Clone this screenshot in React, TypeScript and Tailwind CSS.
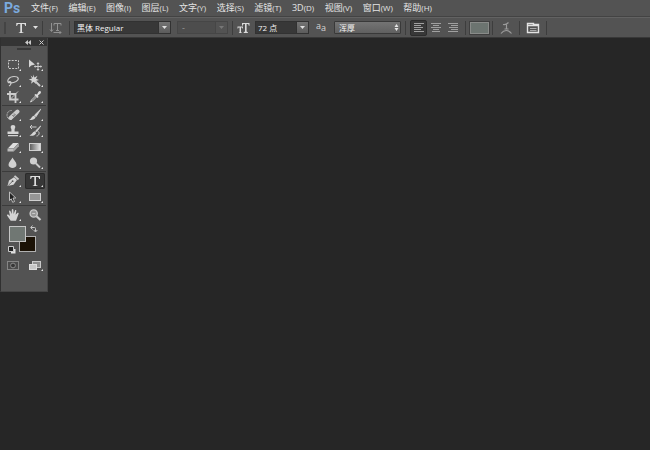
import type { ReactNode } from "react";

const menus = [
  ["文件", "(F)"], ["编辑", "(E)"], ["图像", "(I)"], ["图层", "(L)"], ["文字", "(Y)"], ["选择", "(S)"],
  ["滤镜", "(T)"], ["3D", "(D)"], ["视图", "(V)"], ["窗口", "(W)"], ["帮助", "(H)"],
];

function Icon({ children, className = "h-3.5 w-3.5" }: { children: ReactNode; className?: string }) {
  return (
    <svg viewBox="0 0 14 14" className={`shrink-0 ${className}`} fill="none" stroke="#cbcbcb" aria-hidden="true">
      {children}
    </svg>
  );
}

function Arrow({ color = "#e0e0e0" }: { color?: string }) {
  return (
    <svg viewBox="0 0 5 3" className="h-[3px] w-[5px] shrink-0" aria-hidden="true">
      <path d="M0 0H5L2.5 3Z" fill={color} />
    </svg>
  );
}

function Separator({ className }: { className: string }) {
  return <span className={`h-3.5 w-px shrink-0 bg-[#3d3d3d] ${className}`} />;
}

type Tool = { name: string; art: ReactNode; active?: boolean; single?: boolean };

const groups: Tool[][] = [
  [
    { name: "矩形选框", art: <rect x="2.5" y="2.5" width="10" height="8" strokeDasharray="2 1.2" /> },
    {
      name: "移动",
      art: (
        <>
          <path d="M1 1.5V9.5L3.2 7.5L7 6.5Z" fill="#d6d6d6" stroke="none" />
          <path d="M6.5 8.5H13.5M10 5V12" />
          <path d="M10 4L11.5 6H8.5ZM10 13L8.5 11H11.5ZM6 8.5L7.5 7V10ZM14 8.5L12.5 7V10Z" fill="#cbcbcb" stroke="none" />
        </>
      ),
    },
    { name: "套索", art: <path d="M3 9C0 7 3 2.5 8 2.5C13 2.5 13.5 5.5 10 7.5C7 9 3 9.5 3 8C3 7 5.5 7.5 5 9.5C4.8 10.7 4 11.5 3 12" strokeWidth="1.2" /> },
    {
      name: "魔棒",
      art: (
        <>
          <path d="M5.5 0.5L6.4 3.6L9.5 1.8L8 4.8L11 6L7.8 6.9L8 10L5.6 7.8L3 9.8L3.8 6.7L0.8 5.5L4 4.6L2.6 1.6L5 3.4Z" fill="#d4d4d4" stroke="none" />
          <path d="M7.5 7.5L12 12" strokeWidth="2" />
        </>
      ),
    },
    { name: "裁剪", art: <><path d="M4 1V9.5H12.5M1 4H9.5V13" strokeWidth="1.8" /><path d="M4.5 9L12 1.5" strokeWidth="0.9" /></> },
    {
      name: "吸管",
      art: (
        <>
          <path d="M7.5 4L9 4.5L10.5 1.8C12 0 14 2 12.5 3.5L10 5.5L10.5 7L9.5 8L6.3 5Z" fill="#d9d9d9" stroke="none" />
          <path d="M7.5 6L3.5 10L2.5 12L4.5 11L8.7 6.8" />
        </>
      ),
    },
  ],
  [
    {
      name: "污点修复画笔",
      art: (
        <>
          <path d="M5.5 11.5C-0.5 12 -0.5 2.5 5.5 2.5" strokeDasharray="1.2 1" />
          <path d="M4.5 10L11.5 3.5" strokeWidth="4" strokeLinecap="round" />
          <path d="M6.2 7L8.2 9M8 5.4L10 7.4M7.2 7.2H9" stroke="#666" strokeWidth="0.8" />
        </>
      ),
    },
    { name: "画笔", art: <><path d="M12.7 1.2L6.5 7.2L8 8.7Z" fill="#ddd" /><path d="M6 7.7L7.6 9.3C6.6 12 3.8 12.3 1 11.8C3.5 11 3.2 8.5 6 7.7Z" fill="#d5d5d5" stroke="none" /></> },
    { name: "仿制图章", art: <path d="M7 1C10 1 9.5 4 8.6 5V7.5H12.5V10H1.5V7.5H5.4V5C4.5 4 4 1 7 1ZM2 11H12V12.3H2Z" fill="#d4d4d4" stroke="none" /> },
    { name: "历史记录画笔", art: <><path d="M2 3H8.5M2 3L4 1M2 3L4 5M10.5 7.5C12 9.5 10.5 12 8.5 12" /><path d="M12.7 2L7.5 7L8.5 8Z" fill="#ddd" /><path d="M6.7 7.3L8.3 8.9C7 11.8 4 12 1.5 11.5C4.2 10.5 4 8.5 6.7 7.3Z" fill="#d5d5d5" stroke="none" /></> },
    { name: "橡皮擦", art: <><path d="M7 3H12.7L7.8 8.3H2Z" fill="#dedede" stroke="none" /><path d="M1.5 8.5H7.8V11.5H1.5Z" fill="#bcbcbc" stroke="none" /><path d="M7.8 8.5L12.8 3.2V6.2L7.8 11.5Z" fill="#a5a5a5" stroke="none" /></> },
    {
      name: "渐变",
      art: (
        <>
          <defs><linearGradient id="ramp"><stop stopColor="#5a5a5a" /><stop offset="1" stopColor="#e6e6e6" /></linearGradient></defs>
          <rect x="1.5" y="3.5" width="11" height="7" fill="url(#ramp)" stroke="#d0d0d0" />
        </>
      ),
    },
    { name: "模糊", art: <path d="M6.5 1.5C7.5 4 10.5 6 10.5 8.8C10.5 13 2.5 13 2.5 8.8C2.5 6 5.5 4 6.5 1.5Z" fill="#d0d0d0" stroke="none" /> },
    { name: "减淡", art: <><circle cx="5.5" cy="5" r="3.6" fill="#cfcfcf" stroke="none" /><path d="M8 7.5L12 11.5" strokeWidth="1.8" /></> },
  ],
  [
    {
      name: "钢笔",
      art: (
        <>
          <path d="M1.5 12L3 6.5L8 3.2L11 6L7.5 10.8Z" fill="#d5d5d5" stroke="none" />
          <path d="M8.5 1.8L12.5 5.5" strokeWidth="1.8" />
          <path d="M2.2 11.5L6 7.8" stroke="#555" strokeWidth="0.8" /><circle cx="6.6" cy="7.2" r="0.9" fill="#555" stroke="none" />
        </>
      ),
    },
    { name: "横排文字", active: true, art: <path d="M2.3 2H12V5H11.2C11 3.5 10.5 3 9.2 3H8V10.5C8 11.2 8.5 11.4 9.5 11.5V12H4.8V11.5C5.8 11.4 6.3 11.2 6.3 10.5V3H5C3.8 3 3.3 3.5 3.1 5H2.3Z" fill="#dedede" stroke="none" /> },
    { name: "路径选择", art: <path d="M3.5 2L9.8 8H7L8.5 11.5L6.7 12.3L5.2 8.8L3.5 10.5Z" fill="#222" stroke="#c9c9c9" strokeWidth="0.9" /> },
    { name: "矩形", art: <rect x="1.5" y="3.5" width="11" height="7" fill="#969696" stroke="#d0d0d0" /> },
  ],
  [
    { name: "抓手", art: <path d="M4.7 12.7L1 7.5C0.8 6.5 2 6.2 2.8 7L4 8L3 3.3C3 2.2 4.2 2.2 4.6 3.3L5.7 6L5.8 1.8C6 .8 7.2 .8 7.4 1.8L7.6 6L9 2.6C9.4 1.7 10.5 2.1 10.3 3.1L9.6 6.8L11.5 4.8C12.4 4.3 13 5.2 12.5 6L10 12.7Z" fill="#d4d4d4" stroke="none" /> },
    { name: "缩放", single: true, art: <><circle cx="5.7" cy="5.5" r="3.6" fill="#969696" strokeWidth="1.4" /><path d="M4.2 5.5H7.2" /><path d="M8.5 8.2L12.5 12" strokeWidth="2.2" /></> },
  ],
];

function ToolButton({ tool }: { tool: Tool }) {
  return (
    <button
      type="button"
      aria-label={tool.name}
      aria-pressed={!!tool.active}
      className={`relative flex h-4 items-center justify-center rounded-[2px] ${tool.active ? "bg-[#373737] ring-1 ring-[#2a2a2a] ring-inset" : ""}`}
    >
      <Icon>{tool.art}</Icon>
      {!tool.single && (
        <svg viewBox="0 0 2 2" className="absolute right-0.5 bottom-0.5 h-0.5 w-0.5" aria-hidden="true">
          <path d="M2 0V2H0Z" fill="#e6e6e6" />
        </svg>
      )}
    </button>
  );
}

function Combo({ label, value, width, muted = false }: { label: string; value: string; width: string; muted?: boolean }) {
  return (
    <div className={`flex h-[13px] shrink-0 border ${width} ${muted ? "border-[#464646]" : "border-[#323232]"}`}>
      <input
        aria-label={label}
        defaultValue={value}
        disabled={muted}
        className={`min-w-0 flex-1 leading-[11px] outline-none ${muted ? "bg-[#4d4d4d] pl-1 text-[9px] text-[#999999]" : "bg-[#383838] pl-0.5 text-[8px] text-[#f4f4f4]"}`}
      />
      <button
        type="button"
        aria-label={`${label}选项`}
        disabled={muted}
        className={`flex w-3 items-center justify-center border-l ${muted ? "border-[#464646] bg-[#535353]" : "border-[#323232] bg-gradient-to-b from-[#737373] to-[#5c5c5c]"}`}
      >
        <Arrow color={muted ? "#777777" : undefined} />
      </button>
    </div>
  );
}

function AlignButton({ label, d, active = false }: { label: string; d: string; active?: boolean }) {
  return (
    <button
      type="button"
      aria-label={label}
      aria-pressed={active}
      className={`flex h-4 w-[17px] shrink-0 items-center justify-center rounded-[2px] border ${active ? "border-[#2c2c2c] bg-[#383838]" : "border-transparent"}`}
    >
      <svg viewBox="0 0 10 9" className="h-[9px] w-2.5" stroke="#a0a0a0" aria-hidden="true"><path d={d} /></svg>
    </button>
  );
}

export default function App() {
  return (
    <div className="flex min-h-screen flex-col overflow-x-hidden bg-[#262626] font-['Open_Sans','Noto_Sans_CJK_SC',sans-serif] text-[9px] text-[#e4e4e4]">
      <header>
        <nav aria-label="主菜单" className="flex h-[17px] items-center border-b border-[#434343] bg-[#535353] pl-1">
          <span className="w-[27px] shrink-0 font-['Roboto',sans-serif] text-[14px] leading-4 font-bold text-[#7baade]">Ps</span>
          <div className="flex w-[401px] justify-between leading-4">
            {menus.map(([name, key]) => (
              <button key={name} type="button" className="shrink-0 whitespace-nowrap">
                {name}<span className="text-[8px]">{key}</span>
              </button>
            ))}
          </div>
        </nav>
        <div role="toolbar" aria-label="文字选项" className="flex h-[21px] items-center border-t border-b border-t-[#626262] border-b-[#383838] bg-[#535353]">
          <span className="ml-1 h-3 w-0.5 shrink-0 border-x border-[#444444]" />
          <button type="button" aria-label="当前工具" className="ml-2 flex w-6 shrink-0 items-center justify-between">
            <Icon><path d="M2.3 2H12V5H11.2C11 3.5 10.5 3 9.2 3H8V10.5C8 11.2 8.5 11.4 9.5 11.5V12H4.8V11.5C5.8 11.4 6.3 11.2 6.3 10.5V3H5C3.8 3 3.3 3.5 3.1 5H2.3Z" fill="#dedede" stroke="none" /></Icon>
            <Arrow />
          </button>
          <Separator className="ml-1" />
          <button type="button" aria-label="切换文本取向" className="ml-1.5 shrink-0">
            <Icon><path d="M5 4.5V2.5H12V4.5M8.5 2.5V9M7 9.5H10M2.5 2V10M1 8.5L2.5 10.5L4 8.5M4.5 11.5H12M10.5 10L12 11.5L10.5 13" stroke="#929292" /></Icon>
          </button>
          <Separator className="ml-1.5" />
          <div className="ml-1 shrink-0"><Combo label="字体" value="黑体 Regular" width="w-[97px]" /></div>
          <div className="ml-1.5 shrink-0"><Combo label="字体样式" value="-" width="w-[51px]" muted /></div>
          <Separator className="ml-1" />
          <span className="ml-1 shrink-0"><Icon><path d="M5 2H12.5V4.7H11.8C11.6 3.3 11.2 3 10 3H9.6V10.5L10.9 11.3V12H6.7V11.3L8 10.5V3H7.7C6.3 3 6 3.4 5.7 4.7H5ZM0.5 5.5H6V7.5H5.4L5 6.5H4V11.2L4.8 11.5V12H1.9V11.5L2.6 11.2V6.5H1.5L1.1 7.5H0.5Z" fill="#dadada" stroke="none" /></Icon></span>
          <div className="ml-1 shrink-0"><Combo label="字号" value="72 点" width="w-[54px]" /></div>
          <span className="ml-[7px] flex w-3 shrink-0 items-center leading-3 text-[#d5d5d5]" aria-hidden="true"><span className="pb-1">a</span><span>a</span></span>
          <div className="relative ml-1.5 w-[67px] shrink-0">
            <select aria-label="消除锯齿" className="block h-[13px] w-full appearance-none rounded-[1px] border border-[#393939] bg-gradient-to-b from-[#747474] to-[#606060] pl-1 text-[8px] leading-[11px] text-[#f4f4f4]">
              <option>浑厚</option>
            </select>
            <svg viewBox="0 0 5 7" className="pointer-events-none absolute top-[3px] right-0.5 h-[7px] w-[5px]" fill="#e4e4e4" aria-hidden="true"><path d="M0.5 3L2.5 0L4.5 3ZM0.5 4L2.5 7L4.5 4Z" /></svg>
          </div>
          <Separator className="ml-1" />
          <div className="ml-1 flex shrink-0">
            <AlignButton active label="左对齐" d="M0 .5H10M0 2.5H7M0 4.5H9M0 6.5H7M0 8.5H10" />
            <AlignButton label="居中对齐" d="M0 .5H10M2 2.5H8M0 4.5H10M2 6.5H8M1 8.5H9" />
            <AlignButton label="右对齐" d="M0 .5H10M3 2.5H10M1 4.5H10M3 6.5H10M0 8.5H10" />
          </div>
          <Separator className="ml-1" />
          <button type="button" aria-label="文本颜色" className="ml-1 h-3 w-[19px] shrink-0 border border-[#898b89] bg-[#6c7470] outline outline-[#3f3f3f]" />
          <Separator className="ml-[3px]" />
          <button type="button" aria-label="文字变形" className="ml-1.5 shrink-0">
            <Icon><path d="M4 3.5C6 4 8 3 9.5 1.5M7.5 3V8M5.5 8H9.5M2 12.5C5 8.5 9.5 8.5 12.5 12.5" stroke="#9b9b9b" strokeWidth="1.2" /></Icon>
          </button>
          <Separator className="ml-1.5" />
          <button type="button" aria-label="字符和段落面板" className="ml-1.5 shrink-0">
            <Icon><path d="M1.5 4.5V11.5H12.5V3.5H7.5V2.5H1.5V4.5H12.5" stroke="#e2e2e2" strokeWidth="1.4" /><path d="M4 7.5H10.5M4 9.5H10.5" stroke="#aaaaaa" /></Icon>
          </button>
          <Separator className="ml-1.5" />
        </div>
      </header>

      <main className="flex flex-1 items-start">
        <aside aria-label="工具" className="w-12 border-x border-b border-[#444444] border-l-[#303030] bg-[#535353]">
          <div className="flex h-2 items-center justify-end gap-2 bg-[#343434] pr-[3px]">
            <button type="button" aria-label="折叠" className="flex"><svg viewBox="0 0 6 5" className="h-[5px] w-1.5" fill="#cacaca"><path d="M3 0V5L0 2.5ZM6 0V5L3 2.5Z" /></svg></button>
            <button type="button" aria-label="关闭" className="flex"><svg viewBox="0 0 5 5" className="h-[5px] w-[5px]" stroke="#cacaca"><path d="M.5 .5L4.5 4.5M4.5 .5L.5 4.5" /></svg></button>
          </div>
          <div className="mx-auto mt-0.5 mb-1.5 h-0.5 w-3.5 bg-[#393939]" />
          <div className="divide-y divide-[#3b3b3b] px-px">
            {groups.map((group, i) => (
              <div key={i} className="grid grid-cols-2 gap-x-0.5 px-px pt-px">
                {group.map((tool) => <ToolButton key={tool.name} tool={tool} />)}
              </div>
            ))}
          </div>
          <div className="relative mt-px ml-2 h-7 w-[27px]">
            <button type="button" aria-label="背景色" className="absolute right-0 bottom-0 h-4 w-[17px] border border-[#b0b0b0] bg-[#1b1206]" />
            <button type="button" aria-label="前景色" className="absolute top-0.5 left-0 h-4 w-[17px] border border-[#c5c5c5] bg-[#707773]" />
            <button type="button" aria-label="切换前景色和背景色" className="absolute top-px -right-0.5 h-2 w-2">
              <svg viewBox="0 0 8 8" className="h-2 w-2" fill="none" stroke="#c9c9c9"><path d="M1 2.5H4.5Q5.5 2.5 5.5 3.5V6.5M2.5 .5L.7 2.5L2.5 4.5M3.7 5L5.5 7L7.3 5" /></svg>
            </button>
            <button type="button" aria-label="默认前景色和背景色" className="absolute -bottom-0.5 -left-px h-2 w-2">
              <svg viewBox="0 0 8 8" className="h-2 w-2"><path d="M3 3H7.5V7.5H3Z" fill="#e0e0e0" /><path d="M.5 .5H5.5V5.5H.5Z" fill="#222222" stroke="#cccccc" /></svg>
            </button>
          </div>
          <div className="mt-[5px] mb-[18px] grid grid-cols-2 gap-x-0.5 px-0.5">
            <button type="button" aria-label="快速蒙版" className="flex h-4 items-center justify-center">
              <Icon><rect x="1.5" y="3.5" width="11" height="8" fill="#4b4b4b" stroke="#858585" /><circle cx="7" cy="7.5" r="2.4" fill="#373737" stroke="#8a8a8a" /></Icon>
            </button>
            <button type="button" aria-label="屏幕模式" className="relative flex h-4 items-center justify-center">
              <Icon><rect x="4.5" y="3.5" width="8" height="6" fill="#8f8f8f" stroke="#c9c9c9" /><rect x="1.5" y="6.5" width="7" height="5" fill="#c7c7c7" stroke="#dddddd" /></Icon>
              <svg viewBox="0 0 2 2" className="absolute right-0.5 bottom-0.5 h-0.5 w-0.5"><path d="M2 0V2H0Z" fill="#e6e6e6" /></svg>
            </button>
          </div>
        </aside>
      </main>
    </div>
  );
}
